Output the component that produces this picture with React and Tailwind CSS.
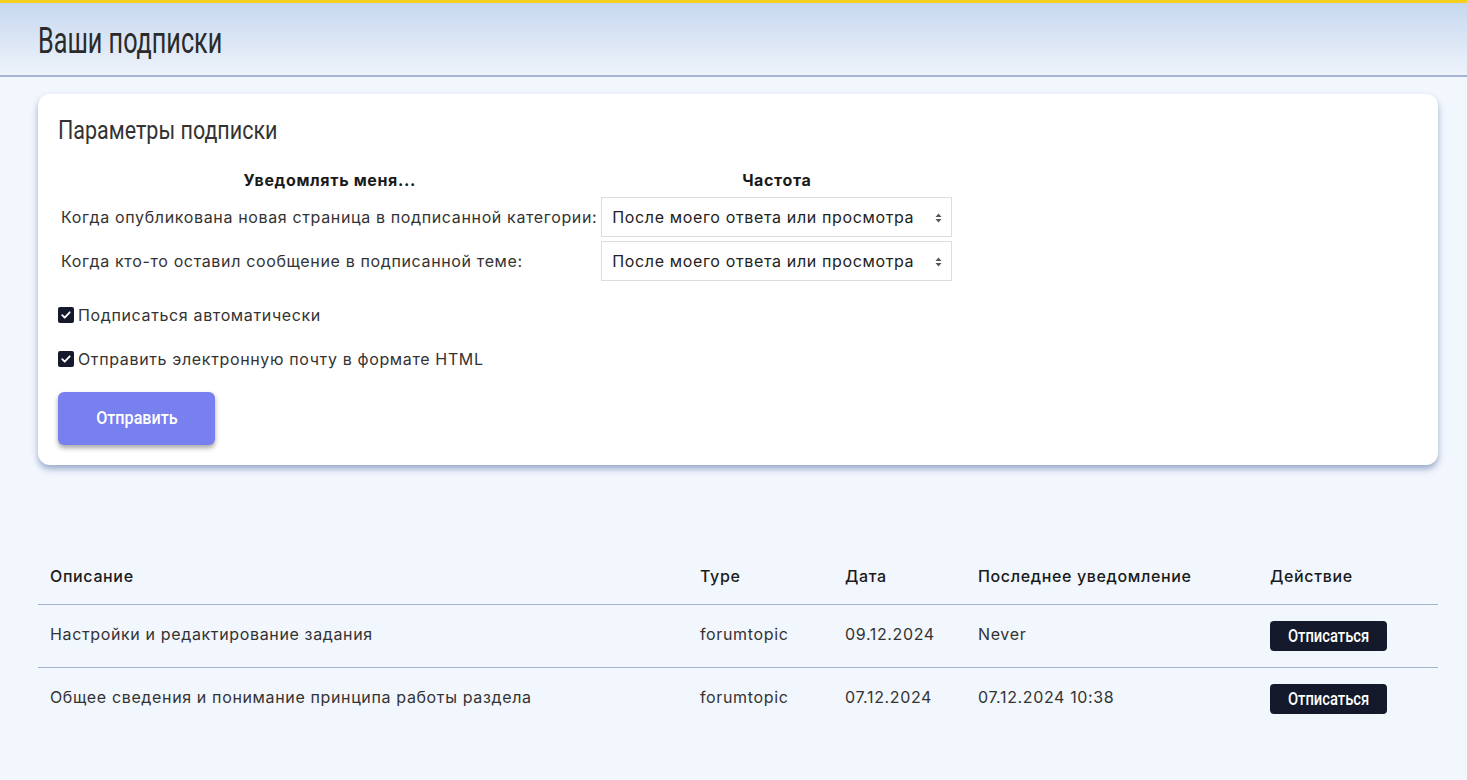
import { useState } from 'react';

const cond = { fontFamily: 'Roboto, "Noto Sans", sans-serif', letterSpacing: 0 };
const body = { fontFamily: 'Inter, "Noto Sans", sans-serif', letterSpacing: '0.04em' };

function Check({ checked, onChange, label }) {
  return (
    <label className="flex items-center gap-1 h-6 cursor-pointer text-[16px] text-[#333]">
      <span
        onClick={onChange}
        className="w-4 h-4 rounded-[2px] bg-[#141a2b] flex items-center justify-center"
      >
        {checked && (
          <svg width="12" height="12" viewBox="0 0 12 12" fill="none">
            <path d="M2.2 6.2l2.5 2.5 5-5.4" stroke="white" strokeWidth="1.8" strokeLinecap="round" strokeLinejoin="round" />
          </svg>
        )}
      </span>
      <span>{label}</span>
    </label>
  );
}

function FreqSelect() {
  return (
    <div className="relative w-[351px] h-10 bg-white border border-[#dddddd] flex items-center pl-[10px] text-[16px] text-[#222]">
      <span>После моего ответа или просмотра</span>
      <svg className="absolute right-[9px] top-[15px]" width="7" height="10" viewBox="0 0 7 10">
        <path d="M3.5 0.5L6.5 4H0.5z M3.5 9.5L0.5 6H6.5z" fill="#555" />
      </svg>
    </div>
  );
}

export default function App() {
  const [auto, setAuto] = useState(true);
  const [html, setHtml] = useState(true);

  const rows = [
    { desc: 'Настройки и редактирование задания', type: 'forumtopic', date: '09.12.2024', last: 'Never' },
    { desc: 'Общее сведения и понимание принципа работы раздела', type: 'forumtopic', date: '07.12.2024', last: '07.12.2024 10:38' },
  ];

  return (
    <div className="min-h-[780px] bg-[#f2f6fd]" style={body}>
      {/* Header */}
      <div className="h-[77px] border-t-[3px] border-[#f5cf1b] border-b-2 border-b-[#a4b3d1] bg-gradient-to-b from-[#c6d8ee] to-[#eef3fb] pl-[38px] pt-1 flex items-center">
        <h1 className="text-[36px] leading-none text-[#2a2a2a] inline-block origin-left scale-x-[0.7]" style={cond}>Ваши подписки</h1>
      </div>

      <div className="pl-[38px] pr-[29px] pt-[17px]">
        {/* Settings card */}
        <div className="bg-white rounded-xl shadow-[0_4px_6px_rgba(80,110,160,0.55)] px-5 pt-[21px] pb-5">
          <h2 className="text-[25px] leading-8 text-[#333] inline-block origin-left scale-x-[0.86]" style={cond}>Параметры подписки</h2>

          <table className="mt-[19px] border-separate border-spacing-x-[2px] border-spacing-y-[4px] text-[16px] text-[#333]">
            <thead>
              <tr>
                <th className="font-bold text-[#1a1a1a] leading-5 pb-[3px] text-center">Уведомлять меня...</th>
                <th className="font-bold text-[#1a1a1a] leading-5 pb-[3px] text-center">Частота</th>
              </tr>
            </thead>
            <tbody>
              <tr>
                <td className="pl-[1px] pr-[2px]">Когда опубликована новая страница в подписанной категории:</td>
                <td><FreqSelect /></td>
              </tr>
              <tr>
                <td className="pl-[1px] pr-[2px]">Когда кто-то оставил сообщение в подписанной теме:</td>
                <td><FreqSelect /></td>
              </tr>
            </tbody>
          </table>

          <div className="mt-[18px] flex flex-col gap-5">
            <Check checked={auto} onChange={() => setAuto(!auto)} label="Подписаться автоматически" />
            <Check checked={html} onChange={() => setHtml(!html)} label="Отправить электронную почту в формате HTML" />
          </div>

          <button className="mt-[21px] w-[157px] h-[53px] rounded-md bg-[#7880ef] text-white shadow-[0_3px_5px_rgba(0,0,0,0.35)]">
            <span className="inline-block text-[19px] font-medium scale-x-[0.85]" style={cond}>Отправить</span>
          </button>
        </div>

        {/* Subscriptions table */}
        <table className="w-full mt-[83px] text-[16px] text-[#333] border-collapse">
          <thead>
            <tr className="border-b border-[#a4b3d1]">
              <th className="w-[650px] text-left font-medium text-[#1a1a1a] pl-3 h-[56px]">Описание</th>
              <th className="w-[145px] text-left font-medium text-[#1a1a1a] pl-3">Type</th>
              <th className="w-[133px] text-left font-medium text-[#1a1a1a] pl-3">Дата</th>
              <th className="w-[292px] text-left font-medium text-[#1a1a1a] pl-3">Последнее уведомление</th>
              <th className="text-left font-medium text-[#1a1a1a] pl-3">Действие</th>
            </tr>
          </thead>
          <tbody>
            {rows.map((r, i) => (
              <tr key={i} className={i === 0 ? 'border-b border-[#a4b3d1]' : ''}>
                <td className="pl-3 h-[63px] pb-1">{r.desc}</td>
                <td className="pl-3 pb-1">{r.type}</td>
                <td className="pl-3 pb-1">{r.date}</td>
                <td className="pl-3 pb-1">{r.last}</td>
                <td className="pl-3">
                  <button className="h-[30px] w-[117px] rounded bg-[#141a2b] text-white">
                    <span className="inline-block text-[18px] font-medium scale-x-[0.82]" style={cond}>Отписаться</span>
                  </button>
                </td>
              </tr>
            ))}
          </tbody>
        </table>
      </div>
    </div>
  );
}
